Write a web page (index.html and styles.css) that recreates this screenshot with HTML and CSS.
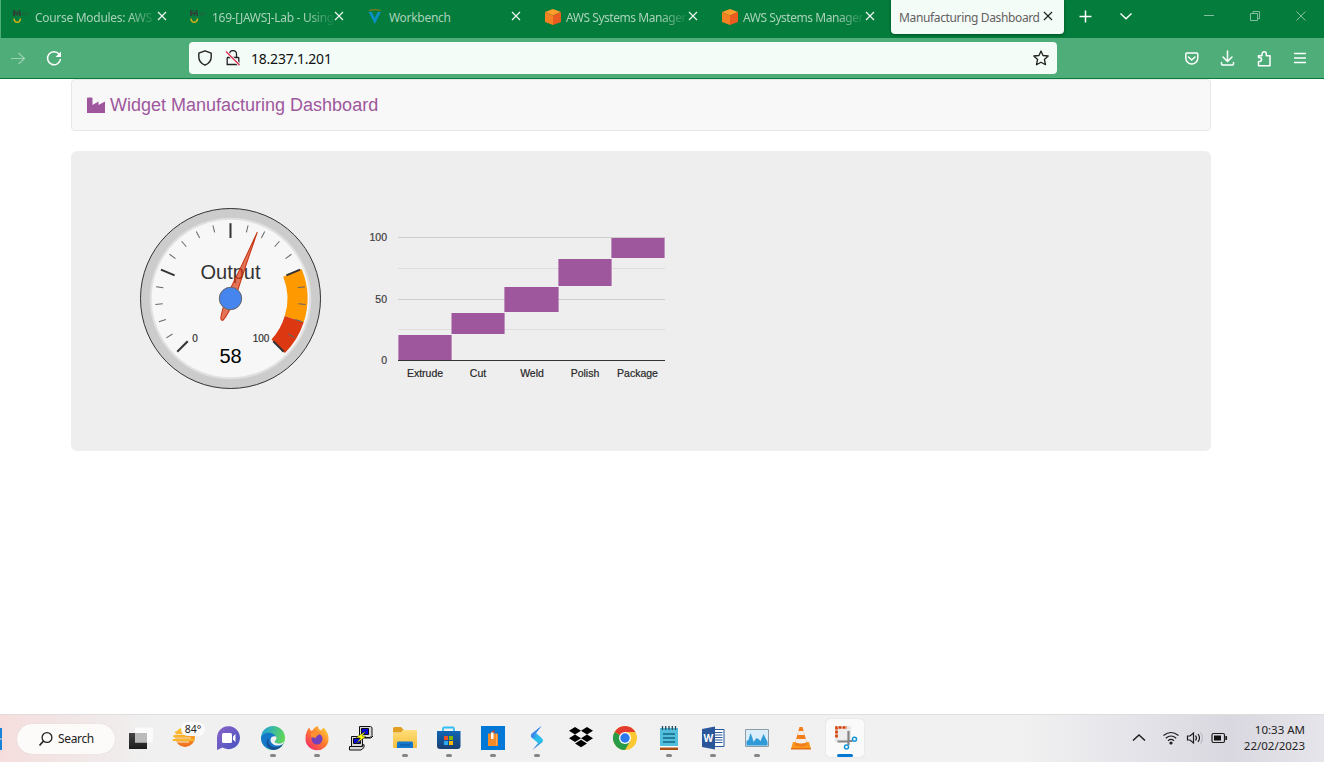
FILE: index.html
```html
<!DOCTYPE html>
<html lang="en">
<head>
<meta charset="utf-8">
<title>Manufacturing Dashboard</title>
<link rel="stylesheet" href="styles.css">
</head>
<body>
<svg class="defs" width="0" height="0" aria-hidden="true">
  <defs>
    <linearGradient id="gEdge" x1="0" y1="0" x2="1" y2="0.3"><stop offset="0" stop-color="#1b9de2"/><stop offset="1" stop-color="#5fd65a"/></linearGradient>
    <linearGradient id="gFox" x1="1" y1="0" x2="0.1" y2="1"><stop offset="0" stop-color="#ffe03a"/><stop offset=".5" stop-color="#ff7a2e"/><stop offset="1" stop-color="#f0256e"/></linearGradient>
    <linearGradient id="gSun" x1="0" y1="0" x2="0" y2="1"><stop offset="0" stop-color="#ffc91f"/><stop offset="1" stop-color="#ee6a1c"/></linearGradient>
    <linearGradient id="gDark" x1="0" y1="0" x2="0" y2="1"><stop offset="0" stop-color="#454545"/><stop offset="1" stop-color="#1c1c1c"/></linearGradient>
    <linearGradient id="gChat" x1="0" y1="0" x2="1" y2="1"><stop offset="0" stop-color="#8a62c8"/><stop offset="1" stop-color="#4655c0"/></linearGradient>
    <linearGradient id="gBolt" x1="0" y1="0" x2="0" y2="1"><stop offset="0" stop-color="#3e8df2"/><stop offset=".6" stop-color="#27c3e8"/><stop offset="1" stop-color="#4b6fe6"/></linearGradient>
    <linearGradient id="gFolder" x1="0" y1="0" x2="0" y2="1"><stop offset="0" stop-color="#ffdf7a"/><stop offset="1" stop-color="#f7bd3b"/></linearGradient>
    <linearGradient id="gStore" x1="0" y1="0" x2="0" y2="1"><stop offset="0" stop-color="#0f66b4"/><stop offset="1" stop-color="#1b3f73"/></linearGradient>
    <symbol id="close" viewBox="0 0 10 10"><path d="M1 1 9 9M9 1 1 9" fill="none" stroke="currentColor" stroke-width="1.2"/></symbol>
    <symbol id="jaws" viewBox="0 0 18 16"><path d="M0 1h2v6H0zM2.500 1h1v5h-1zM4 3h1v4H4zM5.500 1h2v3h-2zM6 5h2v2H6zM0 4h8v1H0z" fill="#2c4438"/><path d="M9 4h7v1.500H9zM10 3h1v4h-1zM13 3h1v4h-1z" fill="#176b3d"/><path d="M1 9.500C1.500 14.500 7 14.500 7.500 9.500" fill="none" stroke="#d9b41a" stroke-width="1.500"/></symbol>
    <symbol id="cube" viewBox="0 0 16 16"><path d="M8 0 16 3 8 6.500 0 3z" fill="#ff9d2b"/><path d="M0 3 8 6.500V16L0 13z" fill="#f58220"/><path d="M16 3 8 6.500V16l8-3z" fill="#ea5b20"/></symbol>
  </defs>
</svg>

<header class="browser">
  <div class="tabs">
    <div class="tab"><svg class="fav"><use href="#jaws"/></svg><span class="title fade">Course Modules: AWS</span><svg class="x"><use href="#close"/></svg></div>
    <div class="tab"><svg class="fav"><use href="#jaws"/></svg><span class="title fade">169-[JAWS]-Lab - Using</span><svg class="x"><use href="#close"/></svg></div>
    <div class="tab"><svg class="fav" viewBox="0 0 18 16"><path d="M2 1.500Q8 0 13.500 1.500" fill="none" stroke="#a07a1c" stroke-width="1.200"/><path d="M1.500 3h3.500l2.800 6 2.800-6H14L7.800 15z" fill="#0b8fc4"/></svg><span class="title">Workbench</span><svg class="x"><use href="#close"/></svg></div>
    <div class="tab"><svg class="fav cube"><use href="#cube"/></svg><span class="title fade tight">AWS Systems Manager</span><svg class="x"><use href="#close"/></svg></div>
    <div class="tab"><svg class="fav cube"><use href="#cube"/></svg><span class="title fade tight">AWS Systems Manager</span><svg class="x"><use href="#close"/></svg></div>
    <div class="tab active"><span class="title">Manufacturing Dashboard</span><svg class="x"><use href="#close"/></svg></div>
    <svg class="tabtools" viewBox="0 0 260 32" fill="none" stroke="#fff" stroke-width="1.500">
      <path d="M15.500 16.500h12M21.500 10.500v12M56.500 13.500l5.500 5.200 5.500-5.200"/>
      <g stroke="#83bf9e" stroke-width="1"><path d="M140 15.500h10M232.500 11.500l9 9M241.500 11.500l-9 9M186.500 13.500h7v7h-7zM189 13v-1.500h6.500v7H194"/></g>
    </svg>
  </div>
  <div class="toolbar">
    <svg class="navicons" viewBox="0 0 189 40" fill="none" stroke="#fff" stroke-width="1.500"><path d="M11 20.500h13.500M18.500 15l6 5.500-6 5.500" stroke="#9dd1b4" stroke-width="1.200"/><path d="M59.200 16.300A6.500 6.500 0 1 0 60.500 21"/><path d="M61 13.500v5.500h-5.500z" fill="#fff" stroke="none"/></svg>
    <div class="address">
      <svg class="shield" viewBox="0 0 16 16"><path d="M8 .8 14.200 3.200V7C14.200 11 12 13.500 8 15.200 4 13.500 1.800 11 1.800 7V3.200z" fill="none" stroke="#222" stroke-width="1.400" stroke-linejoin="round"/></svg>
      <svg class="lock" viewBox="0 0 16 16"><path d="M4.500 7.500V4a3.500 3.500 0 0 1 7 0v3.500M3 7.500h10a.8.800 0 0 1 .8.800v6.200H2.200V8.300a.8.800 0 0 1 .8-.8z" fill="none" stroke="#222" stroke-width="1.300"/><path d="M1 1.500 14.500 15" stroke="#f3fcf7" stroke-width="3"/><path d="M1 1.500 14.500 15" stroke="#e22850" stroke-width="1.300"/></svg>
      <span class="url">18.237.1.201</span>
      <svg class="star" viewBox="0 0 16 16"><path d="M8 1 10 5.500 15.200 6 11.400 9.500 12.500 14.700 8 12.200 3.500 14.700 4.600 9.500.8 6 6 5.500z" fill="none" stroke="#222" stroke-width="1.300" stroke-linejoin="round"/></svg>
    </div>
    <svg class="rtools" viewBox="0 0 130 20" fill="none" stroke="#fff" stroke-width="1.500" stroke-linejoin="round" stroke-linecap="round">
      <path d="M3 4h9.500a1.300 1.300 0 0 1 1.300 1.300V9a6 6 0 0 1-12 0V5.300A1.300 1.300 0 0 1 3 4zM4.500 8l3.200 3 3.300-3"/>
      <path d="M43.500 2v10M39 8l4.500 4.500L48 8M37.500 13.500v1.500a1 1 0 0 0 1 1h10a1 1 0 0 0 1-1v-1.500"/>
      <path d="M74.500 16V12.500h1a2 2 0 0 0 0-4h-1V6.800h3.500V5a2 2 0 0 1 4.300 0v1.800H86V16.800H74.500z"/>
      <path d="M110 4.500h12M110 9h12M110 13.500h12" stroke-linecap="butt"/>
    </svg>
  </div>
</header>

<main class="page">
  <nav class="navbar">
    <svg class="factory" viewBox="0 0 18 16"><path d="M0 1.500Q0 .5 1 .5H4.500Q5.500.500 5.500 1.500V8L11.500 4.500V8L18 4.500V16H0z" fill="#9e579d"/></svg>
    <span>Widget Manufacturing Dashboard</span>
  </nav>
  <section class="panel">
    <svg class="gauge" viewBox="-92.500 -92.500 185 185">
      <circle r="90" fill="#ccc" stroke="#333"/>
      <circle r="79.800" fill="#f7f7f7" stroke="#e0e0e0" stroke-width="2"/>
      <path d="M52.660-21.810 71.140-29.470A77 77 0 0 1 73.230 23.790L54.210 17.610A57 57 0 0 0 52.660-21.810z" fill="#f90"/>
      <path d="M54.210 17.610 73.230 23.790A77 77 0 0 1 54.450 54.450L41 41A57 57 0 0 0 54.210 17.610z" fill="#dc3912"/>
      <g id="ticks"></g>
      <text class="label" y="-19.500">Output</text>
      <text class="small" x="-35.500" y="43.500">0</text>
      <text class="small" x="30.500" y="43.500">100</text>
      <text class="value" y="64.500">58</text>
      <path transform="rotate(22)" d="M0-71.500Q2-30 4.500 0Q3 18 1.600 22Q0 25-1.600 22Q-3 18-4.500 0Q-2-30 0-71.500z" fill="#dc3912" fill-opacity=".7" stroke="#c63310"/>
      <circle r="11.200" fill="#4684ee" stroke="#666"/>
    </svg>
    <svg class="chart" viewBox="360 225 320 160">
      <path d="M398 268.500h267M398 329.500h267" stroke="#dedede"/>
      <path d="M398 237.500h267M398 299.500h267" stroke="#ccc"/>
      <g fill="#9e579d"><path d="M398.400 335h53.200v25h-53.200zM451.500 313h53.100v21h-53.100zM504.400 287h54.200v25h-54.200zM558.400 259h53.200v27h-53.200zM611.400 238h53.200v20h-53.200z"/></g>
      <path d="M398 360.500h267" stroke="#333"/>
      <g class="ylab"><text x="387" y="241">100</text><text x="387" y="303">50</text><text x="387" y="364">0</text></g>
      <g class="xlab"><text x="425" y="377">Extrude</text><text x="478" y="377">Cut</text><text x="532" y="377">Weld</text><text x="585" y="377">Polish</text><text x="637.500" y="377">Package</text></g>
    </svg>
  </section>
</main>

<footer class="taskbar">
  <svg class="start" viewBox="0 0 2 24"><path d="M0 1h2v10.500H0zM0 12.500h2V23H0z" fill="#1683d8"/></svg>
  <div class="search"><svg viewBox="0 0 16 16"><path d="M5.500 10 1.500 14.500" stroke="#222" stroke-width="1.700"/><circle cx="9" cy="6.500" r="4.900" fill="none" stroke="#222" stroke-width="1.300"/></svg><span>Search</span></div>
  <div class="apps">
    <div class="app"><svg viewBox="0 0 44 48"><path d="M10 19h18v16H10z" fill="url(#gDark)"/><path d="M16 13.500h18v15H16z" fill="#fff" fill-opacity=".75"/><path d="M16 19h12v9.500H16z" fill="#bbb"/></svg></div>
    <div class="app"><svg viewBox="0 0 44 48"><circle cx="22" cy="23" r="10" fill="url(#gSun)"/><path d="M10 20.300h14M10 24h18M10 28h16" stroke="#f6ecdf" stroke-width="1"/><path d="M13 18.300h11M11 22.200h12M10.500 26h20" stroke="#f8b62a" stroke-width="2" stroke-linecap="round"/></svg><span class="temp">84°</span></div>
    <div class="app"><svg viewBox="0 0 44 48"><path d="M10 36V24a11.500 11.500 0 1 1 5.500 9.500z" fill="url(#gChat)"/><rect x="15" y="19" width="10" height="10" rx="1.500" fill="#fff"/><path d="M26 22.500 28.500 20v8L26 25.500z" fill="#fff"/></svg></div>
    <div class="app open"><svg viewBox="0 0 44 48"><circle cx="22" cy="24" r="12" fill="url(#gEdge)"/><path d="M10 24C12 17.500 22 17 25 22.500 26 26 23 27 24 28.500 27 30.500 31 29.500 33 28.500A12 12 0 0 1 10 24z" fill="#1477c8"/><path d="M25 22.500C27 25 23 27 24 28.500 27 30.500 31 29.500 33.500 27.500L32 30C27 33 20 31.500 19.500 26 19.500 23 22 21.500 25 22.500z" fill="#f1f1f1"/><path d="M18 24C16 29 19 34 26 33 29 32.500 31 31 32 30A12 12 0 0 1 22 36C15 34 14 27 18 24z" fill="#164f92"/></svg></div>
    <div class="app open"><svg viewBox="0 0 44 48"><path d="M12 17 14 13.500 16 17 18 16Q19 13 23 12 23 15 26 16.500L28.500 13.500Q34 19 33.500 25.500A11.500 11 0 0 1 10.500 25Q10.500 20 12 17z" fill="url(#gFox)"/><circle cx="22" cy="25" r="5.500" fill="#7540ba"/><path d="M16 19Q22 17 24.500 21 21 21 21 24L16 23z" fill="#ff9130"/></svg></div>
    <div class="app"><svg viewBox="0 0 44 48" stroke="#111"><path d="M20.500 12.500h11l1.500 1v8l-2 2H20.500zM20 24h12l2-2" fill="#d8d8d8"/><path d="M22.500 14.500h7v6h-7z" fill="#0606dc"/><path d="M12.500 22.500h11v10h-11zM10.500 32.500h11.500l3-2v3l-3 2.500H10.500z" fill="#d8d8d8"/><path d="M14.500 24.500h7v5h-7z" fill="#0606dc"/><path d="M27 17 17 23.500l4.500.5-4.500 5.500 10-7-4-.5z" fill="#ff0" stroke-width=".4"/></svg></div>
    <div class="app open"><svg viewBox="0 0 44 48"><path d="M10 14.500Q10 13 11.500 13H18l2.500 2.500-2 3H10z" fill="#e3a020"/><path d="M10 19h8l2-3h13q1 0 1 1v16q0 1-1 1H11q-1 0-1-1z" fill="url(#gFolder)"/><path d="M14 34v-5q0-1.500 1.500-1.500h13q1.500 0 1.500 1.500v5z" fill="#1477cc"/><path d="M17 31h10" stroke="#0d539a"/></svg></div>
    <div class="app open"><svg viewBox="0 0 44 48"><path d="M16 18v-3.200Q16 13.500 17.200 13.500h8.600Q27 13.500 27 14.800V18" fill="none" stroke="#35bff3" stroke-width="1.800"/><path d="M10 17h23.500v15q0 3-3 3H13q-3 0-3-3z" fill="url(#gStore)"/><path d="M17 22h4v4h-4z" fill="#f25022"/><path d="M22 22h4v4h-4z" fill="#7fba00"/><path d="M17 27h4v4h-4z" fill="#2eaaf0"/><path d="M22 27h4v4h-4z" fill="#ffb900"/></svg></div>
    <div class="app open"><svg viewBox="0 0 44 48"><path d="M10 12h24v24H10z" fill="#0078d7"/><path d="M17 19.500h10V32H17z" fill="#f58a28"/><path d="M19 18.500 23.500 16v3" fill="#d9421d"/><path d="M20 18.500h2.500V25H20z" fill="#fff"/><path d="M25.500 20v11" stroke="#ffad58"/></svg></div>
    <div class="app open"><svg viewBox="0 0 44 48"><path d="M26.500 12 16.500 20Q15 22 17 24L23 29 17.500 36 27 28.500Q29 26.500 27 24.500L21 19z" fill="url(#gBolt)"/><path d="M26.500 12 21 19 19 21.500 21 23.500 17 24Q15 22 16.500 20z" fill="#3d86ea"/></svg></div>
    <div class="app"><svg viewBox="0 0 44 48"><path d="M16 13l6 3.800-6 3.700-6-3.700zM28 13l6 3.800-6 3.700-6-3.700zM16 20.500l6 3.800-6 3.700-6-3.700zM28 20.500l6 3.800-6 3.700-6-3.700zM22 25.800l6 3.700-6 3.800-6-3.800z"/></svg></div>
    <div class="app"><svg viewBox="0 0 44 48"><circle cx="22" cy="24" r="12" fill="#fcc934"/><path d="M22 24 11.600 18A12 12 0 0 1 32.400 18H22z" fill="#e33b2e"/><path d="M11.600 18A12 12 0 0 0 22 36L27.200 27 22 24z" fill="#2a9b48"/><circle cx="22" cy="24" r="6" fill="#fff"/><circle cx="22" cy="24" r="4.700" fill="#2b79ec"/></svg></div>
    <div class="app open"><svg viewBox="0 0 44 48"><path d="M13 33h18v3H13z" fill="#aa4f16"/><path d="M13 32h18v1.500H13z" fill="#fff"/><path d="M13 14h18v18H13z" fill="#51bedb"/><path d="M16 20h12M16 24h12M16 28h12" stroke="#126684" stroke-width="1.700"/><path d="M15.500 12v4M18.700 12v4M22 12v4M25.300 12v4M28.500 12v4" stroke="#26485a" stroke-width="1.300"/></svg></div>
    <div class="app open"><svg viewBox="0 0 44 48"><path d="M23 15.500h10v17H23z" fill="#fff" stroke="#2b579a"/><path d="M24 18.500h7.500M24 21h7.500M24 23.500h7.500M24 26h7.500M24 28.500h7.500" stroke="#2b579a"/><path d="M11 15 24 12.500v23L11 33z" fill="#2b579a"/><text class="wordmark" x="17.300" y="27.800">W</text></svg></div>
    <div class="app open"><svg viewBox="0 0 44 48"><path d="M10.500 15.500h23v17h-23z" fill="#d9edfa" stroke="#8f9da7"/><path d="M11.500 31.500V27l2-1 2-7 2 5 1 4 3-4 2 1 2 2 3-7 2 4 2 4v3.500z" fill="#319bd8"/></svg></div>
    <div class="app"><svg viewBox="0 0 44 48"><path d="M14 28h16l2 7H12z" fill="#f8981d"/><path d="M20.500 13h3L28.500 31q-6.500 3-13 0z" fill="#f37d18"/><path d="M19.400 17h5.200l1 4h-7.200zM17.300 25h9.400l1 3.500q-5.700 2-11.400 0z" fill="#f1eee9"/><path d="M12 34h20v1.500H12z" fill="#e56c10"/></svg></div>
    <div class="app current"><svg viewBox="0 0 44 48"><rect x="12" y="12" width="16" height="16" fill="#e8e8e8"/><path d="M13.500 23.500V13.500H24" fill="none" stroke="#d83b01" stroke-width="2.600" stroke-dasharray="3 1"/><path d="M25.500 17v10.500H14.500M25.500 27h4M25.500 27v4" fill="none" stroke="#858585" stroke-width="2.200"/><path d="M15.500 15.500h8.500v10h-8.500z" fill="#eee"/><circle cx="31.500" cy="25.300" r="2" fill="#fff" stroke="#1293d7" stroke-width="1.500"/><circle cx="23.500" cy="33" r="2" fill="#fff" stroke="#1293d7" stroke-width="1.500"/></svg></div>
  </div>
  <div class="tray">
    <svg viewBox="0 0 110 24" fill="none" stroke="#1c1c1c" stroke-width="1.200">
      <path d="M8 13.500 14 8l6 5.500" stroke-width="1.500"/>
      <g transform="translate(0 -1)"><path d="M38.500 9.500Q46 3.500 53.500 9.500M40.800 12.200Q46 7.800 51.200 12.200M43 14.700Q46 12.200 49 14.700"/><circle cx="46" cy="17" r="1" fill="#1c1c1c"/>
      <path d="M62.500 10h2.500l3.500-3v10L65 14h-2.500zM70.500 9.500Q72.300 12 70.500 14.500M73 8Q76 12 73 16"/><path d="M75.500 6.500Q79.500 12 75.500 17.500" stroke="#bcbcc4"/>
      <rect x="87" y="7.500" width="12.500" height="9" rx="1.500"/><path d="M89 9.500h7v5h-7z" fill="#111" stroke="none"/><path d="M101.200 10v4" stroke-width="1.700"/></g>
    </svg>
    <div class="clock"><span>10:33 AM</span><span>22/02/2023</span></div>
  </div>
</footer>
<script src="gauge.js"></script>
</body>
</html>
```
FILE: styles.css
```css
* { box-sizing: border-box; }
body {
  margin: 0;
  width: 1324px;
  height: 762px;
  display: flex;
  flex-direction: column;
  overflow: hidden;
  background: #fff;
  font-family: "Noto Sans", "Open Sans", sans-serif;
}
svg { display: block; flex: none; }
.defs { position: absolute; }

.browser { flex: none; height: 79px; border-bottom: 1px solid #047c3b; background: #047c3b; }
.tabs { display: flex; height: 38px; padding-left: 6px; box-shadow: inset 1px 0 #4fad79; }
.tab { width: 177px; height: 34px; flex: none; display: flex; align-items: center; padding-left: 7px; color: #a9d2ba; font-size: 12px; letter-spacing: -.3px; }
.fav { width: 18px; height: 16px; margin: 0 4px 1px 0; }
.fav.cube { width: 16px; margin: 0 5px 1px 1px; }
.title { width: 121px; flex: none; white-space: nowrap; }
.tight { letter-spacing: -.45px; }
.fade { mask-image: linear-gradient(to right, #000 78%, transparent 102%); }
.x { width: 10px; height: 10px; margin: 0 0 2px 1px; color: #eef8f2; }
.active { width: 173px; padding-left: 8px; background: #f3fcf7; color: #65605f; border-radius: 0 0 4px 4px; box-shadow: 0 1px 3px rgba(0,0,0,.4); letter-spacing: -.36px; }
.active .title { width: 143px; }
.active .x { color: #222; }
.tabtools { width: 260px; height: 32px; }

.toolbar { display: flex; height: 40px; background: #4fad79; }
.navicons { width: 189px; height: 40px; }
.address { width: 868px; height: 32px; margin-top: 4px; padding: 0 8px; display: flex; align-items: center; background: #f3fcf7; border-radius: 4px; }
.shield, .lock, .star { width: 16px; height: 16px; }
.lock { margin-left: 12px; }
.url { flex: 1; margin-left: 10px; font-size: 14px; letter-spacing: -.22px; color: #111; }
.rtools { width: 130px; height: 20px; margin: 11px 0 0 127px; }

.page { flex: 1; width: 1140px; margin-left: 71px; }
.navbar { height: 52px; display: flex; align-items: center; gap: 5px; padding-left: 15px; background: #f8f8f8; border: 1px solid #e7e7e7; border-radius: 4px; color: #9e579d; font: 18px "Liberation Sans", Arial, sans-serif; }
.factory { width: 18px; height: 16px; margin-bottom: 1px; }
.panel { height: 300px; margin-top: 20px; padding: 55px 0 0 67px; display: flex; background: #eee; border-radius: 6px; }
.gauge { width: 185px; height: 185px; }
.chart { width: 320px; height: 160px; margin: 19px 0 0 37px; }
.gauge text, .chart text { font-family: "Liberation Sans", Arial, sans-serif; text-anchor: middle; fill: #333; }
.gauge .label { font-size: 20px; }
.gauge .small { font-size: 10px; stroke: #333; stroke-width: .2px; }
.gauge .value { font-size: 20px; fill: #000; }
.chart text { font-size: 10px; stroke: #333; stroke-width: .2px; }
.chart .ylab text { text-anchor: end; fill: #444; font-size: 10.500px; }
.chart .xlab text { fill: #222; font-size: 10.500px; }

.taskbar { flex: none; height: 48px; display: flex; align-items: center; border-top: 1px solid #e1dddd; background: linear-gradient(90deg, #f6dddd 0, #f2e5e5 60px, #f0f0f0 150px, #f1f1f1 1020px, #e4e3e9 1140px, #d9d8e0 1230px, #e6e5eb 1324px); }
.start { width: 2px; height: 24px; }
.search { width: 98px; height: 30px; margin-left: 15px; padding-left: 21px; display: flex; align-items: center; gap: 4px; border-radius: 15px; background: #fdfafa; box-shadow: 0 0 1px #cfc5c5; font-size: 12px; color: #222; }
.search svg { width: 16px; height: 16px; }
.search span { letter-spacing: -.35px; }
.apps { display: flex; margin-left: 4px; align-self: stretch; margin-top: -1px; }
.app { width: 44px; height: 48px; position: relative; }
.app svg { width: 44px; height: 48px; position: relative; }
.app.open::after { content: ""; position: absolute; left: 19px; top: 40px; width: 6px; height: 3px; border-radius: 2px; background: #868686; }
.app.current::before { content: ""; position: absolute; left: 3px; top: 5px; width: 38px; height: 38px; border-radius: 4px; background: #fafafa; box-shadow: 0 0 1px #bbb; }
.app.current::after { content: ""; position: absolute; left: 14px; top: 40px; width: 16px; height: 3px; border-radius: 2px; background: #0078d4; }
.temp { position: absolute; left: 18px; top: 8px; width: 24px; height: 14px; border-radius: 7px; background: #fafafa; font-size: 10.500px; line-height: 14px; text-align: center; color: #222; }
.wordmark { font: bold 10px "Open Sans", sans-serif; text-anchor: middle; fill: #fff; }
.tray { flex: 1; display: flex; align-items: center; padding-right: 19px; justify-content: space-between; margin-left: 258px; }
.tray svg { width: 110px; height: 24px; }
.clock { display: flex; flex-direction: column; align-items: flex-end; margin-bottom: 2px; font-size: 11.500px; line-height: 16px; color: #222; white-space: nowrap; }
```
FILE: gauge.js
```js
// Scale marks: 20 divisions over a 270 degree sweep, a major mark at every fifth one.
const ticks = document.getElementById("ticks");
for (let i = 0; i <= 20; i++) {
  const major = i % 5 === 0;
  const line = document.createElementNS("http://www.w3.org/2000/svg", "line");
  line.setAttribute("y1", -75.3);
  line.setAttribute("y2", major ? -60.5 : -68);
  line.setAttribute("stroke", major ? "#333" : "#666");
  line.setAttribute("stroke-width", major ? 2 : 1);
  line.setAttribute("transform", `rotate(${-135 + i * 13.5})`);
  ticks.appendChild(line);
}
```
